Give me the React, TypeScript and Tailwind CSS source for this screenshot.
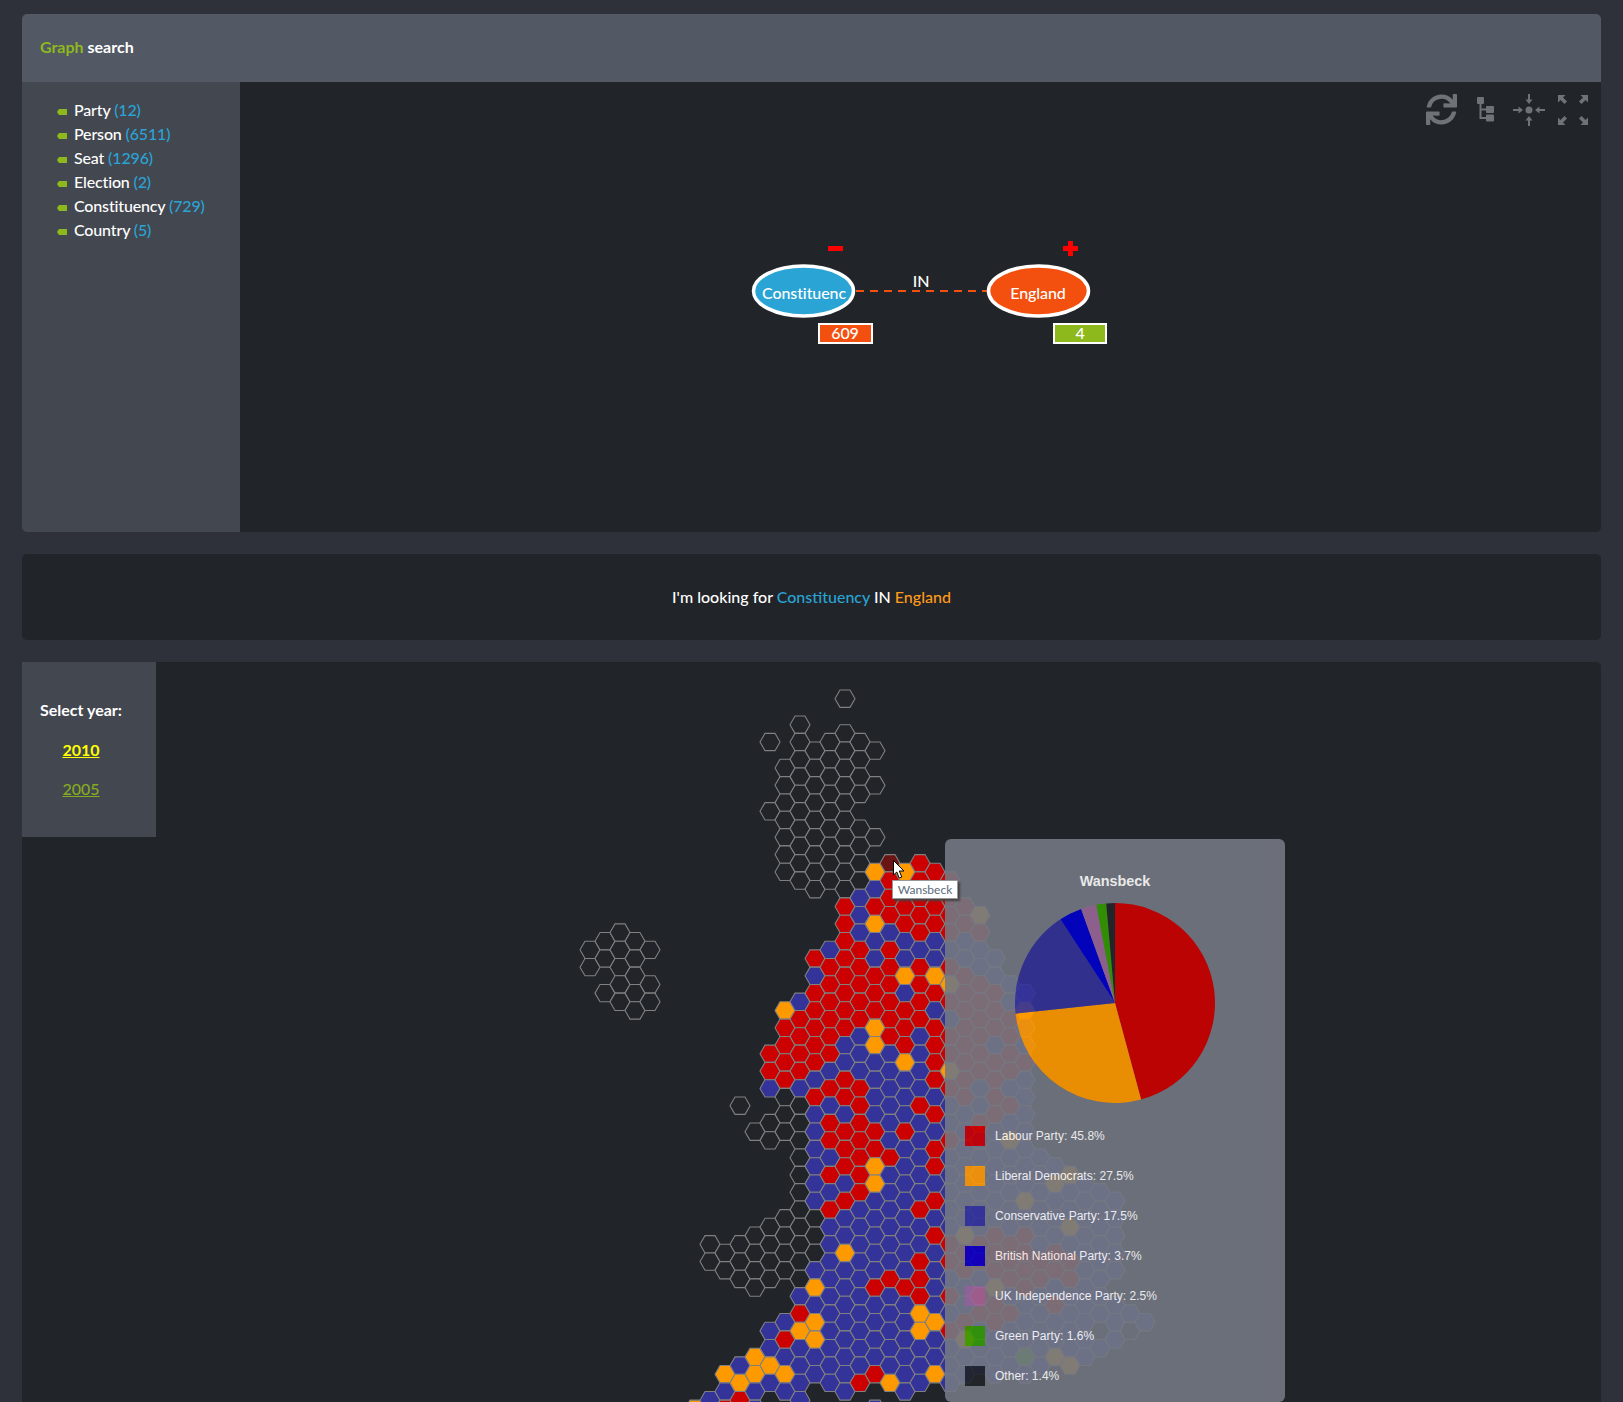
import { FaSync } from "react-icons/fa";

const hexColors: Record<string, string> = {
  n: "#212428",
  r: "#cc0000",
  b: "#333399",
  o: "#ff9900",
  g: "#339900",
  h: "#6b1414",
};

// [column, first half-row, one letter per cell going down]
const hexRuns: [number, number, string][] = [
  [-17, 29, "nn"],
  [-16, 28, "nn"],
  [-16, 34, "n"],
  [-15, 27, "nnnnn"],
  [-14, 28, "nnnnn"],
  [-13, 29, "n"],
  [-13, 33, "nn"],
  [-10, 82, "o"],
  [-9, 63, "nn"],
  [-9, 81, "b"],
  [-8, 64, "nn"],
  [-8, 78, "obr"],
  [-7, 47, "n"],
  [-7, 63, "nnn"],
  [-7, 77, "bor"],
  [-6, 50, "n"],
  [-6, 62, "nnnn"],
  [-6, 76, "oobb"],
  [-5, 5, "n"],
  [-5, 13, "n"],
  [-5, 41, "rrb"],
  [-5, 49, "nn"],
  [-5, 61, "nnnn"],
  [-5, 73, "bbob"],
  [-4, 8, "nnnnnnn"],
  [-4, 36, "orrrrnnn"],
  [-4, 60, "nnnn"],
  [-4, 72, "brbob"],
  [-3, 3, "nnnnnnnnnn"],
  [-3, 35, "brrrrbnnnnnnnnnnnbrobbbb"],
  [-2, 6, "nnnnnnnnn"],
  [-2, 30, "rbrrrrrbrbbbbbbnnnboboobb"],
  [-1, 5, "nnnnnnnnn"],
  [-1, 29, "brrrrrrbrbrrbrbrbbbbbbbbbb"],
  [0, 0, "n"],
  [0, 4, "nnnnnnnnnn"],
  [0, 24, "rrrrrrrrbbrrbrrrbrbbobbbbbbbb"],
  [1, 5, "nnnn"],
  [1, 15, "nnnn"],
  [1, 23, "bbbrrrrrbbbrrrrrrrbbbbbbbbbbr"],
  [2, 6, "n"],
  [2, 10, "n"],
  [2, 16, "n"],
  [2, 20, "obrobbrrroobbbbrroobbbbbrbbbbr"],
  [2, 82, "b"],
  [3, 19, "hrrrbrrrrrrbbbbbbrbbbbbbrbbbbbo"],
  [4, 20, "orrrbbobrrrobbbrbbbbbbbbrbbbbbb"],
  [5, 19, "rrrrrbrrrrbbbbrbbbbbrbbrrroobbb"],
  [6, 20, "rrrrbborbrrrrbrbrrbrbrbbbbobbo"],
  [7, 21, "rrrrbrorbrrorbbrbbbbbrrbrbrbbb"],
  [8, 24, "rrbbrrrrrrrrbbbbbbborrbbrobb"],
  [9, 25, "orbbrrrrrrbbrbbbbbbrrbrrbbb"],
  [10, 30, "bbrrrbrrrrbbbbbbrrrorrbbb"],
  [11, 33, "bbrrrrbrbobbbbbrrrbrbbb"],
  [12, 34, "bobbrbbbbbbbobrrrrbbbgb"],
  [13, 53, "bbbbbbrrbbbbb"],
  [14, 54, "bobbbrrbrbbo"],
  [15, 55, "obbobrrbbbbo"],
  [16, 56, "bbbbbbbbbbb"],
  [17, 57, "bbbbbbbbnb"],
  [18, 58, "bbbbb"],
  [18, 70, "bbb"],
  [19, 71, "bn"],
  [20, 72, "b"],
];

const hexPoints = "-10,0 -5,-8.66 5,-8.66 10,0 5,8.66 -5,8.66";

const hexes = hexRuns.flatMap(([col, start, cells]) =>
  cells.split("").map((cell, i) => ({
    key: `${col}-${start + i * 2}`,
    x: 845 + 15 * col,
    y: 698.7 + 8.66 * (start + i * 2),
    fill: hexColors[cell],
  }))
);

const parties = [
  { name: "Labour Party", share: 45.8, color: "#cc0000" },
  { name: "Liberal Democrats", share: 27.5, color: "#ff9900" },
  { name: "Conservative Party", share: 17.5, color: "#333399" },
  { name: "British National Party", share: 3.7, color: "#0000cc" },
  { name: "UK Independence Party", share: 2.5, color: "#996699" },
  { name: "Green Party", share: 1.6, color: "#339900" },
  { name: "Other", share: 1.4, color: "#212428" },
];

const labels = [
  { name: "Party", count: 12 },
  { name: "Person", count: 6511 },
  { name: "Seat", count: 1296 },
  { name: "Election", count: 2 },
  { name: "Constituency", count: 729 },
  { name: "Country", count: 5 },
];

function slicePath(from: number, to: number) {
  const r = 100;
  const a = (from / 100) * Math.PI * 2;
  const b = (to / 100) * Math.PI * 2;
  const large = to - from > 50 ? 1 : 0;
  return `M100 100 L${100 + r * Math.sin(a)} ${100 - r * Math.cos(a)} A${r} ${r} 0 ${large} 1 ${100 + r * Math.sin(b)} ${100 - r * Math.cos(b)} Z`;
}

function PieChart() {
  let total = 0;
  return (
    <svg width="200" height="200" viewBox="0 0 200 200" className="mx-auto mt-[13px] block">
      {parties.map((p) => {
        const d = slicePath(total, total + p.share);
        total += p.share;
        return <path key={p.name} d={d} fill={p.color} />;
      })}
    </svg>
  );
}

function TreeIcon() {
  return (
    <svg width="17" height="25" viewBox="0 0 17 25" fill="#6f7378" className="mt-[3px]">
      <rect width="7" height="7" rx="1" />
      <rect x="2.5" y="7" width="2" height="15" />
      <rect x="9" y="9" width="8" height="7" rx="1" />
      <rect x="9" y="17.5" width="8" height="7" rx="1" />
      <rect x="3" y="11.5" width="6" height="2" />
      <rect x="3" y="20" width="6" height="2" />
    </svg>
  );
}

function CenterIcon() {
  return (
    <svg width="32" height="32" viewBox="0 0 32 32" fill="#6f7378">
      <circle cx="16" cy="16" r="3.5" />
      {[0, 90, 180, 270].map((deg) => (
        <g key={deg} transform={`rotate(${deg} 16 16)`}>
          <rect x="15" y="0" width="2" height="6" />
          <polygon points="12.5,5.5 19.5,5.5 16,10" />
        </g>
      ))}
    </svg>
  );
}

function ExpandIcon() {
  return (
    <svg width="30" height="30" viewBox="0 0 30 30" fill="#6f7378" className="mt-px">
      {[0, 90, 180, 270].map((deg) => (
        <polygon key={deg} transform={`rotate(${deg} 15 15)`} points="0,0 7.5,0 5,2.5 9,6.5 6.5,9 2.5,5 0,7.5" />
      ))}
    </svg>
  );
}

function Graph() {
  return (
    <svg viewBox="240 82 1361 450" className="absolute inset-0 h-full w-full" fontFamily="Lato, sans-serif" fontWeight="500" fontSize="16" letterSpacing="-0.1" fill="#fff">
      <line x1="856" y1="291" x2="988" y2="291" stroke="#f35010" strokeWidth="2" strokeDasharray="8 6" />
      <text x="921" y="287" textAnchor="middle">IN</text>
      <ellipse cx="803.5" cy="291" rx="50" ry="25" fill="#2aa3d5" stroke="#fff" strokeWidth="3.5" />
      <text x="804" y="299" textAnchor="middle">Constituenc</text>
      <ellipse cx="1038.5" cy="291" rx="50" ry="25" fill="#f35010" stroke="#fff" strokeWidth="3.5" />
      <text x="1038" y="299" textAnchor="middle">England</text>
      <rect x="819" y="324" width="53" height="19" fill="#f35010" stroke="#fff" strokeWidth="2" />
      <text x="845" y="339" textAnchor="middle">609</text>
      <rect x="1054" y="324" width="52" height="19" fill="#8db91c" stroke="#fff" strokeWidth="2" />
      <text x="1080" y="339" textAnchor="middle">4</text>
      <rect x="828" y="246" width="15" height="5" fill="#ff0000" />
      <rect x="1063" y="246" width="15" height="5" fill="#ff0000" />
      <rect x="1068" y="241" width="5" height="15" fill="#ff0000" />
    </svg>
  );
}

export default function App() {
  return (
    <div className="flex h-[1402px] flex-col gap-[22px] overflow-hidden bg-[#2e3139] px-[22px] pt-[14px] font-['Lato',sans-serif] text-base font-medium text-white">
      <section>
        <header className="flex h-[68px] items-center rounded-t-[5px] bg-[#525864] pb-0.5 pl-[18px] font-bold">
          <span className="text-[#8db91c]">Graph</span>&nbsp;search
        </header>
        <div className="flex h-[450px]">
          <ul className="w-[218px] rounded-bl-[5px] bg-[#434750] pl-[35px] pt-4 tracking-[-0.15px]">
            {labels.map((l) => (
              <li key={l.name} className="flex h-6 items-center gap-[7px]">
                <svg width="10" height="6" viewBox="0 0 10 6" fill="#8db91c" className="mt-1">
                  <path d="M0 3 2 0h8v6H2z" />
                </svg>
                <span>
                  {l.name} <span className="text-[#2aa3d5]">({l.count})</span>
                </span>
              </li>
            ))}
          </ul>
          <div className="relative flex-1 rounded-br-[5px] bg-[#212428]">
            <Graph />
            <div className="absolute right-[13px] top-3 flex items-start">
              <FaSync size={31} color="#6f7378" />
              <div className="ml-[20px]">
                <TreeIcon />
              </div>
              <div className="ml-[19px]">
                <CenterIcon />
              </div>
              <div className="ml-[13px]">
                <ExpandIcon />
              </div>
            </div>
          </div>
        </div>
      </section>

      <section className="flex h-[86px] items-center justify-center rounded-[5px] bg-[#212428]">
        <p>
          I'm looking for <span className="text-[#2aa3d5]">Constituency</span> IN{" "}
          <span className="text-[#ff9a1a]">England</span>
        </p>
      </section>

      <section className="relative flex-1 rounded-tr-[5px] bg-[#212428]">
        <svg viewBox="22 662 1579 740" className="absolute inset-0 h-full w-full" stroke="#808080" strokeWidth="1.1">
          {hexes.map((h) => (
            <polygon key={h.key} points={hexPoints} transform={`translate(${h.x} ${h.y})`} fill={h.fill} />
          ))}
        </svg>

        <div className="relative h-[175px] w-[134px] bg-[#434750] pl-[18px] pt-9">
          <div className="inline-flex flex-col items-center gap-[15.5px] font-bold">
            <span>Select year:</span>
            <a className="text-[#ffff00] underline">2010</a>
            <a className="font-medium text-[#85ac1e] underline">2005</a>
          </div>
        </div>

        <div className="absolute left-[923px] top-[177px] h-[563px] w-[340px] rounded-[6px] bg-[#747883] pt-[33px] font-['Liberation_Sans',Arial,sans-serif] font-normal opacity-90">
          <h3 className="text-center text-[14.4px] font-bold leading-[18px]">Wansbeck</h3>
          <PieChart />
          <ul className="mt-[23px] flex flex-col gap-5 pl-5">
            {parties.map((p) => (
              <li key={p.name} className="flex h-5 items-center gap-[10px] text-xs tracking-[0.02px]">
                <span className="h-5 w-5" style={{ backgroundColor: p.color }} />
                {p.name}: {p.share}%
              </li>
            ))}
          </ul>
        </div>

        <svg width="12" height="19" viewBox="0 0 12 19" className="absolute left-[871px] top-[198px]">
          <polygon points="0.5,0.5 0.5,15 3.8,12 6.2,18 8.8,17 6.3,11 11,11" fill="#fff" stroke="#000" strokeWidth="1" />
        </svg>
        <div className="absolute left-[870px] top-[218px] flex h-[19px] w-[66px] items-center justify-center border border-[#999] bg-white text-xs font-normal text-[#5b6b7b] shadow-[2px_2px_2px_#444]">
          Wansbeck
        </div>
      </section>
    </div>
  );
}
